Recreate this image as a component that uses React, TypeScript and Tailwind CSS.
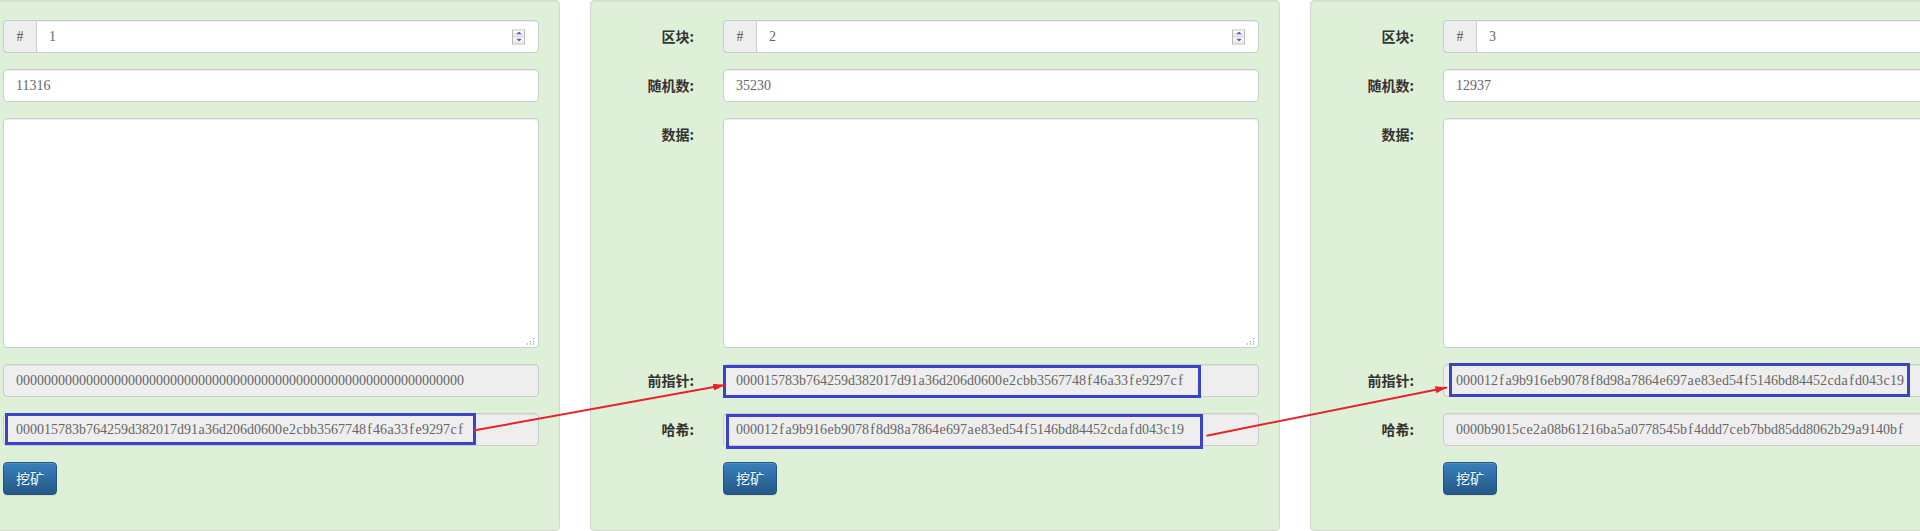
import React from "react";

type Block = {
  num: number;
  nonce: string;
  prev: string;
  hash: string;
};

const blocks: Block[] = [
  {
    num: 1,
    nonce: "11316",
    prev: "0000000000000000000000000000000000000000000000000000000000000000",
    hash: "000015783b764259d382017d91a36d206d0600e2cbb3567748f46a33fe9297cf",
  },
  {
    num: 2,
    nonce: "35230",
    prev: "000015783b764259d382017d91a36d206d0600e2cbb3567748f46a33fe9297cf",
    hash: "000012fa9b916eb9078f8d98a7864e697ae83ed54f5146bd84452cdafd043c19",
  },
  {
    num: 3,
    nonce: "12937",
    prev: "000012fa9b916eb9078f8d98a7864e697ae83ed54f5146bd84452cdafd043c19",
    hash: "0000b9015ce2a08b61216ba5a0778545bf4ddd7ceb7bbd85dd8062b29a9140bf",
  },
];

const serif = "font-['Liberation_Serif','Noto_Sans_CJK_SC',serif]";
const cjk = "font-['Noto_Sans_CJK_SC','Noto_Sans',sans-serif]";

// fixed 7px pitch per character, like a half-width CJK system font
const MonoText = ({ text }: { text: string }) => (
  <span className="flex whitespace-nowrap">
    {text.split("").map((c, i) => (
      <span key={i} className="inline-block w-[7px] text-center">
        {c}
      </span>
    ))}
  </span>
);

const Row = ({
  label,
  children,
}: {
  label: string;
  children: React.ReactNode;
}) => (
  <div className="flex items-start">
    <label
      className={`flex h-[33px] w-[132px] shrink-0 items-center justify-end pr-[29px] text-[14px] font-bold text-[#333] ${cjk}`}
    >
      {label}
    </label>
    <div className="min-w-0 flex-1">{children}</div>
  </div>
);

const Spinner = () => (
  <div className="absolute right-[14px] top-1/2 flex h-[15px] w-[13px] -translate-y-1/2 flex-col border border-[#b8b8b8]">
    <div className="flex flex-1 items-center justify-center border-b border-[#c4c4c4] bg-gradient-to-b from-white to-[#e4e4e4]">
      <svg width="6" height="3" viewBox="0 0 6 3">
        <path d="M0 3 L3 0 L6 3 Z" fill="#5461b4" />
      </svg>
    </div>
    <div className="flex flex-1 items-center justify-center bg-gradient-to-b from-white to-[#e4e4e4]">
      <svg width="6" height="3" viewBox="0 0 6 3">
        <path d="M0 0 L6 0 L3 3 Z" fill="#5461b4" />
      </svg>
    </div>
  </div>
);

const ResizeGrip = () => (
  <svg
    className="absolute bottom-[3px] right-[4px]"
    width="9"
    height="8"
    viewBox="0 0 9 8"
  >
    {[
      [7.5, 1.5],
      [4.5, 4.5],
      [7.5, 4.5],
      [1.5, 7],
      [4.5, 7],
      [7.5, 7],
    ].map(([x, y], i) => (
      <rect key={i} x={x - 0.6} y={y - 0.6} width="1.2" height="1.2" fill="#9a9a9a" />
    ))}
  </svg>
);

const fieldBase =
  "h-[33px] w-full rounded-[4px] border border-[#ccc] px-3 text-[14px] text-[#666] shadow-[inset_0_1px_1px_rgba(0,0,0,0.075)]";

const BlockPanel = ({ block }: { block: Block }) => (
  <div className="flex h-[531px] w-[690px] shrink-0 flex-col gap-4 rounded-[4px] border border-[#d2dbcc] bg-[#dff0d8] pr-5 pt-[19px] shadow-[inset_0_1px_1px_rgba(0,0,0,0.05)]">
    <Row label="区块:">
      <div className="relative flex h-[33px]">
        <span
          className={`flex w-[33px] shrink-0 items-center justify-center rounded-l-[4px] border border-r-0 border-[#ccc] bg-[#eee] text-[14px] text-[#555] ${serif}`}
        >
          #
        </span>
        <div
          className={`flex flex-1 items-center rounded-r-[4px] border border-[#ccc] bg-white px-3 text-[14px] text-[#666] shadow-[inset_0_1px_1px_rgba(0,0,0,0.075)] ${serif}`}
        >
          {block.num}
        </div>
        <Spinner />
      </div>
    </Row>
    <Row label="随机数:">
      <div className={`flex items-center bg-white ${fieldBase} ${serif}`}>
        {block.nonce}
      </div>
    </Row>
    <Row label="数据:">
      <div className="relative">
        <textarea
          className="block h-[230px] w-full resize-none rounded-[4px] border border-[#ccc] bg-white px-3 py-[6px] text-[14px] shadow-[inset_0_1px_1px_rgba(0,0,0,0.075)] outline-none"
          defaultValue=""
        />
        <ResizeGrip />
      </div>
    </Row>
    <Row label="前指针:">
      <div className={`flex items-center bg-[#eee] ${fieldBase} ${serif}`}>
        <MonoText text={block.prev} />
      </div>
    </Row>
    <Row label="哈希:">
      <div className={`flex items-center bg-[#eee] ${fieldBase} ${serif}`}>
        <MonoText text={block.hash} />
      </div>
    </Row>
    <Row label="">
      <button
        type="button"
        className={`h-[33px] rounded-[4px] border border-[#245580] bg-gradient-to-b from-[#3780bd] to-[#255887] px-3 text-[14px] text-white shadow-[inset_0_1px_0_rgba(255,255,255,0.15),0_1px_1px_rgba(0,0,0,0.075)] [text-shadow:0_-1px_0_rgba(0,0,0,0.2)] ${cjk}`}
      >
        挖矿
      </button>
    </Row>
  </div>
);

// hand-drawn callouts linking each hash to the next block's previous pointer
const Callouts = () => (
  <div className="pointer-events-none absolute inset-0">
    <div className="absolute left-[5px] top-[413px] h-[32px] w-[471px] border-[3px] border-[#3b44c8]" />
    <div className="absolute left-[723px] top-[365px] h-[33px] w-[478px] border-[3px] border-[#3b44c8]" />
    <div className="absolute left-[726px] top-[414px] h-[35px] w-[477px] border-[3px] border-[#3b44c8]" />
    <div className="absolute left-[1449px] top-[363px] h-[34px] w-[461px] border-[3px] border-[#3b44c8]" />
    <svg className="absolute inset-0" width="1920" height="531">
      <defs>
        <marker
          id="arrowhead"
          viewBox="0 0 10 6"
          refX="10"
          refY="3"
          markerWidth="13"
          markerHeight="7"
          markerUnits="userSpaceOnUse"
          orient="auto"
        >
          <path d="M0 0 L10 3 L0 6 Z" fill="#e8232b" />
        </marker>
      </defs>
      <line
        x1="473.5"
        y1="430.5"
        x2="725"
        y2="385"
        stroke="#e8232b"
        strokeWidth="2"
        markerEnd="url(#arrowhead)"
      />
      <line
        x1="1206.5"
        y1="435.7"
        x2="1447"
        y2="387.5"
        stroke="#e8232b"
        strokeWidth="2"
        markerEnd="url(#arrowhead)"
      />
    </svg>
  </div>
);

export default function App() {
  return (
    <div className="relative h-[531px] w-[1920px] overflow-hidden bg-white">
      <div className="-ml-[130px] flex gap-[30px]">
        {blocks.map((b) => (
          <BlockPanel key={b.num} block={b} />
        ))}
      </div>
      <Callouts />
    </div>
  );
}
